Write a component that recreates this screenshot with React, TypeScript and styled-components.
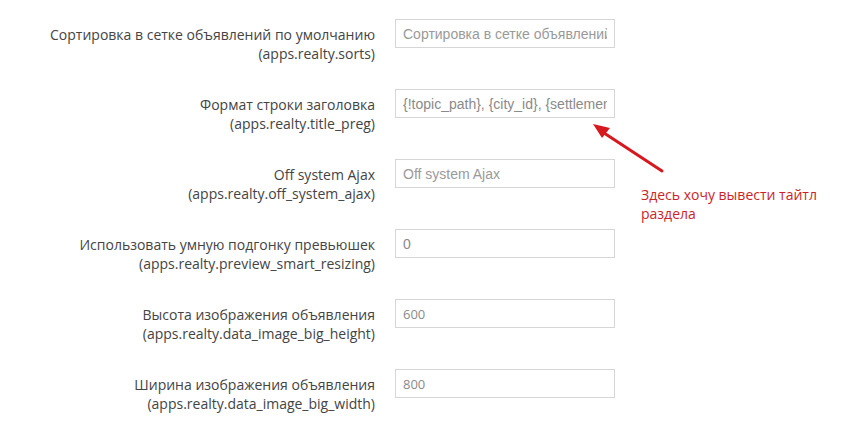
import React from "react";
import styled, { createGlobalStyle } from "styled-components";

const Global = createGlobalStyle`
  body {
    margin: 0;
    background: #ffffff;
    font-family: "Open Sans", "Liberation Sans", sans-serif;
  }
`;

const Page = styled.div`
  position: relative;
  width: 868px;
  height: 439px;
  padding-top: 19px;
  box-sizing: border-box;
  overflow: hidden;
`;

const Form = styled.div`
  display: flex;
  flex-direction: column;
  gap: 26px;
`;

const Row = styled.div`
  display: grid;
  grid-template-columns: 375px 220px;
  column-gap: 20px;
  align-items: start;
`;

const Label = styled.label`
  text-align: right;
  font-size: 14px;
  line-height: 19px;
  color: #444444;
  padding-top: 6px;
`;

const Field = styled.input<{ $sans?: boolean }>`
  box-sizing: border-box;
  width: 220px;
  height: 29px;
  padding: 0 7px;
  border: 1px solid #d6d6d6;
  border-radius: 0;
  outline: none;
  background: #fff;
  font-family: ${(p) =>
    p.$sans ? `"Open Sans", sans-serif` : `"Liberation Sans", Arial, sans-serif`};
  font-size: ${(p) => (p.$sans ? "13px" : "14px")};
  color: #8a8a8a;
  &::placeholder {
    color: #9a9a9a;
  }
`;

const Note = styled.div`
  position: absolute;
  left: 641px;
  top: 185px;
  width: 200px;
  font-size: 14px;
  line-height: 19px;
  color: #cc1f27;
`;

const Arrow = styled.svg`
  position: absolute;
  left: 585px;
  top: 115px;
`;

type Item = {
  title: string;
  key: string;
  placeholder?: string;
  value?: string;
  sans?: boolean;
};

const items: Item[] = [
  {
    title: "Сортировка в сетке объявлений по умолчанию",
    key: "apps.realty.sorts",
    placeholder: "Сортировка в сетке объявлений по умолчанию",
  },
  {
    title: "Формат строки заголовка",
    key: "apps.realty.title_preg",
    value: "{!topic_path}, {city_id}, {settlement_id}",
  },
  {
    title: "Off system Ajax",
    key: "apps.realty.off_system_ajax",
    placeholder: "Off system Ajax",
  },
  {
    title: "Использовать умную подгонку превьюшек",
    key: "apps.realty.preview_smart_resizing",
    value: "0",
  },
  {
    title: "Высота изображения объявления",
    key: "apps.realty.data_image_big_height",
    value: "600",
    sans: true,
  },
  {
    title: "Ширина изображения объявления",
    key: "apps.realty.data_image_big_width",
    value: "800",
    sans: true,
  },
];

export default function App() {
  return (
    <Page>
      <Global />
      <Form>
        {items.map((it) => (
          <Row key={it.key}>
            <Label>
              {it.title}
              <br />({it.key})
            </Label>
            <Field
              $sans={it.sans}
              placeholder={it.placeholder}
              defaultValue={it.value}
              readOnly
            />
          </Row>
        ))}
      </Form>
      <Arrow width="90" height="70" viewBox="0 0 90 70">
        <line x1="77" y1="56" x2="16" y2="16" stroke="#d7181f" strokeWidth="3" strokeLinecap="round" />
        <polygon points="8,9 25,13 17,23" fill="#d7181f" />
      </Arrow>
      <Note>
        Здесь хочу вывести тайтл
        <br />
        раздела
      </Note>
    </Page>
  );
}
